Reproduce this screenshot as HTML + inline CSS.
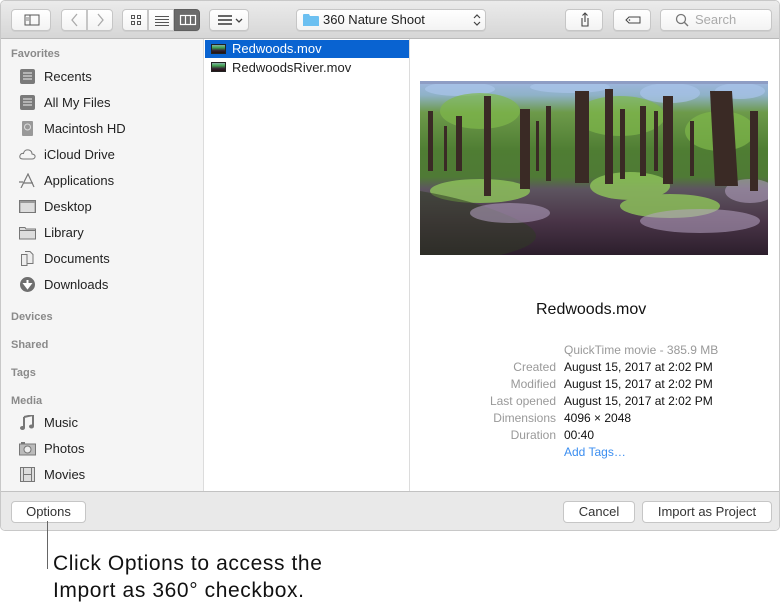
<!DOCTYPE html>
<html><head><meta charset="utf-8"><style>
*{box-sizing:border-box;margin:0;padding:0}
body{width:780px;height:606px;background:#fff;font-family:"Liberation Sans",sans-serif;position:relative;overflow:hidden;color:#222}
.a{position:absolute}
.win{left:0;top:0;width:780px;height:531px;border:1px solid #c8c8c8;border-radius:5px;overflow:hidden;background:#fff}
.tb{left:0;top:0;width:778px;height:38px;background:linear-gradient(#ebebeb,#d6d6d6);border-bottom:1px solid #b9b9b9}
.btn{position:absolute;height:22px;background:linear-gradient(#fff,#f3f3f3);border:1px solid #c6c6c6;border-radius:4px;box-shadow:0 1px 0 rgba(0,0,0,.05)}
.side{left:0;top:38px;width:203px;height:452px;background:#f5f5f5;border-right:1px solid #dcdcdc}
.hd{position:absolute;left:10px;font-size:11px;font-weight:bold;color:#8a8a8a}
.it{position:absolute;left:43px;font-size:13px;color:#222}
.ic{position:absolute;left:18px;width:17px;height:15px}
.col{left:203px;top:38px;width:206px;height:452px;border-right:1px solid #dcdcdc;background:#fff}
.bot{left:0;top:490px;width:778px;height:40px;background:#e9e9e9;border-top:1px solid #c2c2c2}
.bb{position:absolute;top:9px;height:22px;background:#fff;border:1px solid #c6c6c6;border-radius:4px;font-size:13px;color:#333;text-align:center;line-height:20px}
.lab{position:absolute;font-size:12px;color:#999;text-align:right;width:120px;left:435px}
.val{position:absolute;font-size:12px;color:#111;left:563px}
</style></head><body>
<div class="a win">
 <div class="a tb">
  <div class="btn" style="left:10px;top:8px;width:40px"><svg width="40" height="20"><rect x="13" y="5" width="14" height="10" fill="none" stroke="#555"/><line x1="18" y1="5" x2="18" y2="15" stroke="#555"/><line x1="14" y1="8" x2="17" y2="8" stroke="#555" stroke-width=".7"/><line x1="14" y1="10" x2="17" y2="10" stroke="#555" stroke-width=".7"/></svg></div>
  <div class="btn" style="left:60px;top:8px;width:26px;border-radius:4px 0 0 4px"><svg width="26" height="20"><path d="M15 4 L10 10 L15 16" fill="none" stroke="#aaa" stroke-width="1.3"/></svg></div>
  <div class="btn" style="left:86px;top:8px;width:26px;border-radius:0 4px 4px 0"><svg width="26" height="20"><path d="M10 4 L15 10 L10 16" fill="none" stroke="#aaa" stroke-width="1.3"/></svg></div>
  <div class="btn" style="left:121px;top:8px;width:26px;border-radius:4px 0 0 4px"><svg width="26" height="20"><g fill="none" stroke="#555"><rect x="8.5" y="5.5" width="3" height="3"/><rect x="14.5" y="5.5" width="3" height="3"/><rect x="8.5" y="11.5" width="3" height="3"/><rect x="14.5" y="11.5" width="3" height="3"/></g></svg></div>
  <div class="btn" style="left:147px;top:8px;width:26px;border-radius:0"><svg width="26" height="20"><g stroke="#555"><line x1="6" y1="6.5" x2="20" y2="6.5"/><line x1="6" y1="9.5" x2="20" y2="9.5"/><line x1="6" y1="12.5" x2="20" y2="12.5"/><line x1="6" y1="15.5" x2="20" y2="15.5"/></g></svg></div>
  <div class="btn" style="left:173px;top:8px;width:26px;border-radius:0 4px 4px 0;background:#6b6b6b;border-color:#5f5f5f"><svg width="26" height="20"><g fill="none" stroke="#fff" stroke-width="1.2"><rect x="5.5" y="5.5" width="15" height="9"/><line x1="10.5" y1="5.5" x2="10.5" y2="14.5"/><line x1="15.5" y1="5.5" x2="15.5" y2="14.5"/></g></svg></div>
  <div class="btn" style="left:208px;top:8px;width:40px"><svg width="40" height="20"><g fill="#666"><rect x="8" y="5" width="14" height="2"/><rect x="8" y="9" width="14" height="2"/><rect x="8" y="13" width="14" height="2"/></g><path d="M26 9 L29 12 L32 9" fill="none" stroke="#444" stroke-width="1.3"/></svg></div>
  <div class="btn" style="left:295px;top:8px;width:190px;font-size:13px;line-height:20px;color:#222"><svg class="a" style="left:6px;top:3px" width="16" height="14"><path d="M0 2 Q0 1 1 1 L6 1 L7 3 L15 3 Q16 3 16 4 L16 13 L0 13Z" fill="#6cc0f1"/></svg><span class="a" style="left:26px;top:0">360 Nature Shoot</span><svg class="a" style="left:175px;top:3px" width="10" height="14"><path d="M2 5 L5 2 L8 5 M2 9 L5 12 L8 9" fill="none" stroke="#444" stroke-width="1.2"/></svg></div>
  <div class="btn" style="left:564px;top:8px;width:38px"><svg width="38" height="20"><path d="M16 8 L16 16 L22 16 L22 8 M19 3 L19 12 M16.5 5.5 L19 3 L21.5 5.5" fill="none" stroke="#444" stroke-width="1.1"/></svg></div>
  <div class="btn" style="left:612px;top:8px;width:38px"><svg width="38" height="20"><path d="M12 10 L15 7 L26 7 L26 13 L15 13 Z" fill="none" stroke="#444"/><circle cx="15.5" cy="10" r=".8" fill="#444"/></svg></div>
  <div class="btn" style="left:659px;top:8px;width:112px;color:#aaa;font-size:13px;line-height:20px"><svg class="a" style="left:14px;top:3px" width="14" height="14"><circle cx="6" cy="6" r="4.5" fill="none" stroke="#777" stroke-width="1.3"/><line x1="9.3" y1="9.3" x2="13" y2="13" stroke="#777" stroke-width="1.4"/></svg><span class="a" style="left:34px">Search</span></div>
 </div>
 <div class="a side">
  <div class="hd" style="top:9px">Favorites</div>
  <svg class="ic" style="top:30px" viewBox="0 0 17 15"><rect x="1" y="0" width="15" height="15" rx="2" fill="#7a7a7a"/><g stroke="#eee"><line x1="4" y1="4" x2="13" y2="4"/><line x1="4" y1="7" x2="13" y2="7"/><line x1="4" y1="10" x2="13" y2="10"/></g></svg><div class="it" style="top:30px">Recents</div>
  <svg class="ic" style="top:56px" viewBox="0 0 17 15"><rect x="1" y="0" width="15" height="15" rx="2" fill="#7a7a7a"/><g stroke="#eee"><line x1="4" y1="4" x2="13" y2="4"/><line x1="4" y1="7" x2="13" y2="7"/><line x1="4" y1="10" x2="13" y2="10"/></g></svg><div class="it" style="top:56px">All My Files</div>
  <svg class="ic" style="top:82px" viewBox="0 0 17 15"><rect x="3" y="0" width="11" height="15" rx="1" fill="#999"/><circle cx="8.5" cy="6" r="3" fill="none" stroke="#ddd"/></svg><div class="it" style="top:82px">Macintosh HD</div>
  <svg class="ic" style="top:108px" viewBox="0 0 17 15"><path d="M4 12 Q0 12 1 8.5 Q2 6 4.5 6.5 Q5.5 2 10 3 Q13 4 13 7 Q16.5 7.5 16 10 Q15.5 12 13 12Z" fill="none" stroke="#777"/></svg><div class="it" style="top:108px">iCloud Drive</div>
  <svg class="ic" style="top:134px" viewBox="0 0 17 15"><path d="M2 15 L9 1 L15 14 M4 10 L14 10 M0 9 L4 9" fill="none" stroke="#777" stroke-width="1.2"/></svg><div class="it" style="top:134px">Applications</div>
  <svg class="ic" style="top:160px" viewBox="0 0 17 15"><rect x=".5" y="1.5" width="16" height="12" fill="#999" stroke="#777"/><rect x="1.5" y="4" width="14" height="9" fill="#ddd"/></svg><div class="it" style="top:160px">Desktop</div>
  <svg class="ic" style="top:186px" viewBox="0 0 17 15"><path d="M.5 2.5 L6 2.5 L7 4 L16.5 4 L16.5 14 L.5 14Z" fill="#ddd" stroke="#777"/><line x1=".5" y1="5.5" x2="16.5" y2="5.5" stroke="#777"/></svg><div class="it" style="top:186px">Library</div>
  <svg class="ic" style="top:212px" viewBox="0 0 17 15"><path d="M2.5 3.5 L8 3.5 L8 14.5 L2.5 14.5Z M6 .5 L11 .5 L14 3.5 L14 12.5 L8 12.5" fill="#eee" stroke="#777"/></svg><div class="it" style="top:212px">Documents</div>
  <svg class="ic" style="top:238px" viewBox="0 0 17 15"><circle cx="8.5" cy="7.5" r="7.5" fill="#6f6f6f"/><path d="M8.5 3 L8.5 9 M5.5 7 L8.5 11 L11.5 7Z" stroke="#fff" fill="#fff" stroke-width="2"/></svg><div class="it" style="top:238px">Downloads</div>
  <div class="hd" style="top:272px">Devices</div>
  <div class="hd" style="top:300px">Shared</div>
  <div class="hd" style="top:328px">Tags</div>
  <div class="hd" style="top:356px">Media</div>
  <svg class="ic" style="top:376px" viewBox="0 0 17 15"><path d="M5 2 L14 0 L14 11 M5 2 L5 13" stroke="#777" stroke-width="2" fill="none"/><ellipse cx="3.5" cy="13" rx="2.5" ry="2" fill="#777"/><ellipse cx="12.5" cy="11.5" rx="2.5" ry="2" fill="#777"/></svg><div class="it" style="top:376px">Music</div>
  <svg class="ic" style="top:402px" viewBox="0 0 17 15"><rect x=".5" y="3" width="16" height="11" fill="#bbb" stroke="#777"/><circle cx="8.5" cy="8.5" r="3.5" fill="#eee" stroke="#777"/><rect x="2" y="1" width="4" height="2" fill="#777"/></svg><div class="it" style="top:402px">Photos</div>
  <svg class="ic" style="top:428px" viewBox="0 0 17 15"><rect x="1.5" y=".5" width="14" height="14" fill="#ddd" stroke="#777"/><line x1="4.5" y1="0" x2="4.5" y2="15" stroke="#777"/><line x1="12.5" y1="0" x2="12.5" y2="15" stroke="#777"/><line x1="4.5" y1="7.5" x2="12.5" y2="7.5" stroke="#777"/></svg><div class="it" style="top:428px">Movies</div>
 </div>
 <div class="a col">
  <div class="a" style="left:1px;top:1px;width:204px;height:18px;background:#0963d1"></div>
  <div class="a" style="left:7px;top:5px;width:15px;height:10px;background:linear-gradient(#8aa 0,#4a5 30%,#323 70%,#211);border:1px solid #222"></div>
  <div class="a" style="left:28px;top:2px;font-size:13px;color:#fff">Redwoods.mov</div>
  <div class="a" style="left:7px;top:23px;width:15px;height:10px;background:linear-gradient(#8aa 0,#4a5 30%,#323 70%,#211);border:1px solid #222"></div>
  <div class="a" style="left:28px;top:21px;font-size:13px;color:#222">RedwoodsRiver.mov</div>
 </div>
 <svg class="a" style="left:419px;top:80px" width="348" height="174" viewBox="0 0 348 174" preserveAspectRatio="none">
  <defs><linearGradient id="g" x1="0" y1="0" x2="0" y2="1"><stop offset="0" stop-color="#9fb6e0"/><stop offset=".08" stop-color="#8fb2c8"/><stop offset=".18" stop-color="#6d9a4a"/><stop offset=".4" stop-color="#4f7d33"/><stop offset=".55" stop-color="#4f7a35"/><stop offset=".62" stop-color="#5d5560"/><stop offset=".8" stop-color="#4a3548"/><stop offset="1" stop-color="#2c1e2c"/></linearGradient></defs>
  <rect width="348" height="174" fill="url(#g)"/>
  <g fill="#a9c4ea" opacity=".7"><ellipse cx="40" cy="8" rx="35" ry="7"/><ellipse cx="150" cy="6" rx="40" ry="6"/><ellipse cx="250" cy="12" rx="30" ry="10"/><ellipse cx="320" cy="10" rx="25" ry="8"/></g>
  <g fill="#7fb84a" opacity=".7"><ellipse cx="60" cy="30" rx="40" ry="18"/><ellipse cx="200" cy="35" rx="45" ry="20"/><ellipse cx="300" cy="50" rx="35" ry="20"/></g>
  <g fill="#8fc65a" opacity=".8"><ellipse cx="60" cy="110" rx="50" ry="12"/><ellipse cx="210" cy="105" rx="40" ry="14"/><ellipse cx="250" cy="125" rx="50" ry="12"/></g>
  <path d="M0 110 Q60 120 100 140 Q140 160 80 174 L0 174Z" fill="#2f3a25" opacity=".55"/>
  <g fill="#b7a4c4" opacity=".55"><ellipse cx="90" cy="132" rx="40" ry="10"/><ellipse cx="280" cy="140" rx="60" ry="12"/><ellipse cx="330" cy="110" rx="25" ry="12"/></g>
  <g fill="#3a2a25">
   <rect x="64" y="15" width="7" height="100"/><rect x="100" y="28" width="10" height="80"/><rect x="126" y="25" width="5" height="75"/><rect x="155" y="10" width="14" height="92"/><rect x="185" y="8" width="8" height="95"/><rect x="200" y="28" width="5" height="70"/><rect x="220" y="25" width="6" height="70"/><rect x="234" y="30" width="4" height="60"/><rect x="243" y="15" width="10" height="88"/><path d="M290 10 L312 10 L318 105 L295 105Z"/><rect x="330" y="30" width="8" height="80"/><rect x="8" y="30" width="5" height="60"/><rect x="36" y="35" width="6" height="55"/><rect x="270" y="40" width="4" height="55"/><rect x="24" y="45" width="3" height="45"/><rect x="116" y="40" width="3" height="50"/>
  </g>
  <rect width="348" height="3" fill="#8e9dc4"/>
 </svg>
 <div class="a" style="left:535px;top:300px;font-size:16px;color:#111">Redwoods.mov</div>
 <div class="a" style="left:563px;top:342px;font-size:12px;color:#999">QuickTime movie - 385.9 MB</div>
 <div class="lab" style="top:359px">Created</div><div class="val" style="top:359px">August 15, 2017 at 2:02 PM</div>
 <div class="lab" style="top:376px">Modified</div><div class="val" style="top:376px">August 15, 2017 at 2:02 PM</div>
 <div class="lab" style="top:393px">Last opened</div><div class="val" style="top:393px">August 15, 2017 at 2:02 PM</div>
 <div class="lab" style="top:410px">Dimensions</div><div class="val" style="top:410px">4096 × 2048</div>
 <div class="lab" style="top:427px">Duration</div><div class="val" style="top:427px">00:40</div>
 <div class="val" style="top:444px;color:#3b8ef0">Add Tags…</div>
 <div class="a bot">
  <div class="bb" style="left:10px;width:75px">Options</div>
  <div class="bb" style="left:562px;width:72px">Cancel</div>
  <div class="bb" style="left:641px;width:130px">Import as Project</div>
 </div>
</div>
<div class="a" style="left:47px;top:521px;width:1px;height:48px;background:#666"></div>
<div class="a" style="left:53px;top:550px;font-size:21px;line-height:27px;letter-spacing:.6px;color:#111">Click Options to access the<br>Import as 360° checkbox.</div>
</body></html>
